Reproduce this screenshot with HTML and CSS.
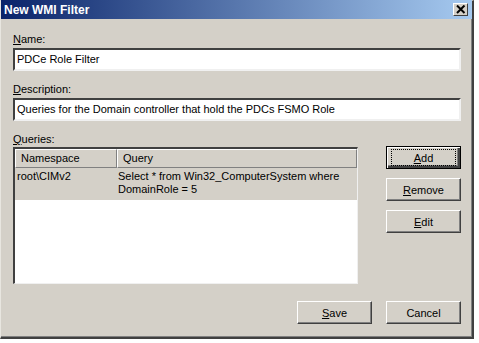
FILE: index.html
```html
<html>
<head>
<link rel="stylesheet" href="styles.css">
</head>
<body>
	<div class="window">
		<div class="titlebar">
			<span class="title">New WMI Filter</span>
			<span class="close">
				<svg width="10" height="9" viewBox="0 0 10 9">
					<path d="M1 0.5 L8.5 8 M8.5 0.5 L1 8" stroke="#000" stroke-width="2" fill="none"/>
				</svg>
			</span>
		</div>
		<div class="content">
			<div class="label"><u>N</u>ame:</div>
			<div class="textbox">PDCe Role Filter</div>

			<div class="label"><u>D</u>escription:</div>
			<div class="textbox">Queries for the Domain controller that hold the PDCs FSMO Role</div>

			<div class="label"><u>Q</u>ueries:</div>
			<div class="queries">
				<div class="listview">
					<div class="header">
						<div class="col ns">Namespace</div>
						<div class="col query">Query</div>
					</div>
					<div class="row">
						<div class="ns">root\CIMv2</div>
						<div class="query">Select * from Win32_ComputerSystem where<br>DomainRole = 5</div>
					</div>
				</div>
				<div class="side-buttons">
					<a href="#" class="button default"><span class="focus"><u>A</u>dd</span></a>
					<a href="#" class="button"><u>R</u>emove</a>
					<a href="#" class="button"><u>E</u>dit</a>
				</div>
			</div>

			<div class="footer">
				<a href="#" class="button"><u>S</u>ave</a>
				<a href="#" class="button">Cancel</a>
			</div>
		</div>
	</div>
</body>
</html>
```

FILE: styles.css
```css
	body {
		margin: 0;
		background: #ffffff;
		font-family: 'Liberation Sans', Arial, sans-serif;
		font-size: 11px;
		color: #000;
	}
	.window {
		width: 471px;
		height: 336px;
		background: #d4d0c8;
		border-top: 1px solid #d4d0c8;
		border-left: 1px solid #e8e6e0;
		border-right: 2px solid #404040;
		border-bottom: 2px solid #404040;
		box-shadow: inset -1px -1px 0 #808080;
		display: flex;
		flex-direction: column;
	}
	.titlebar {
		height: 19px;
		margin-top: -1px;
		background: linear-gradient(to right, #0a246a, #a6caf0);
		display: flex;
		align-items: center;
		justify-content: space-between;
		padding: 0 3px 0 3px;
	}
	.title {
		color: #fff;
		font-weight: bold;
		font-size: 12px;
	}
	.close {
		width: 13px;
		height: 11px;
		margin-right: 1px;
		background: #d4d0c8;
		border-top: 1px solid #fff;
		border-left: 1px solid #fff;
		border-right: 1px solid #404040;
		border-bottom: 1px solid #404040;
		display: flex;
		align-items: center;
		justify-content: center;
	}
	.content {
		padding: 14px 11px 0 12px;
		flex: 1;
		display: flex;
		flex-direction: column;
	}
	.label {
		height: 13px;
		line-height: 13px;
		margin-bottom: 2px;
	}
	.textbox {
		height: 19px;
		line-height: 19px;
		background: #fff;
		border-top: 2px solid #404040;
		border-left: 2px solid #404040;
		border-right: 2px solid #f0f0f0;
		border-bottom: 2px solid #f0f0f0;
		padding-left: 2px;
		margin-bottom: 12px;
		white-space: nowrap;
	}
	.queries {
		display: flex;
		justify-content: space-between;
		margin-top: -1px;
	}
	.listview {
		width: 342px;
		height: 134px;
		background: #fff;
		border-top: 2px solid #404040;
		border-left: 2px solid #404040;
		border-right: 1px solid #f0f0f0;
		border-bottom: 1px solid #f0f0f0;
	}
	.header {
		display: flex;
		height: 19px;
	}
	.col {
		background: #d4d0c8;
		border-top: 1px solid #fff;
		border-left: 1px solid #fff;
		border-right: 1px solid #808080;
		border-bottom: 1px solid #808080;
		line-height: 17px;
		padding-left: 5px;
	}
	.header .ns {
		width: 95px;
	}
	.header .query {
		flex: 1;
	}
	.row {
		display: flex;
		background: #d4d0c8;
		height: 30px;
		line-height: 13px;
		padding-top: 2px;
		white-space: nowrap;
	}
	.row .ns {
		width: 101px;
		padding-left: 2px;
	}
	.row .query {
		flex: 1;
	}
	.side-buttons {
		display: flex;
		flex-direction: column;
		gap: 9px;
		margin-top: -1px;
	}
	.button {
		width: 71px;
		height: 19px;
		background: #d4d0c8;
		border-top: 1px solid #fff;
		border-left: 1px solid #fff;
		border-right: 1px solid #404040;
		border-bottom: 1px solid #404040;
		box-shadow: inset -1px -1px 0 #808080;
		padding: 1px;
		display: flex;
		align-items: center;
		justify-content: center;
		color: #000;
		text-decoration: none;
		font-size: 11px;
	}
	.button.default {
		border: 1px solid #000;
		box-shadow: inset 1px 1px 0 #fff, inset -2px -2px 0 #404040, inset -3px -3px 0 #808080;
	}
	.focus {
		width: 63px;
		height: 15px;
		border: 1px dotted #000;
		display: flex;
		align-items: center;
		justify-content: center;
	}
	.footer {
		display: flex;
		justify-content: flex-end;
		gap: 14px;
		margin-top: 17px;
	}
```
